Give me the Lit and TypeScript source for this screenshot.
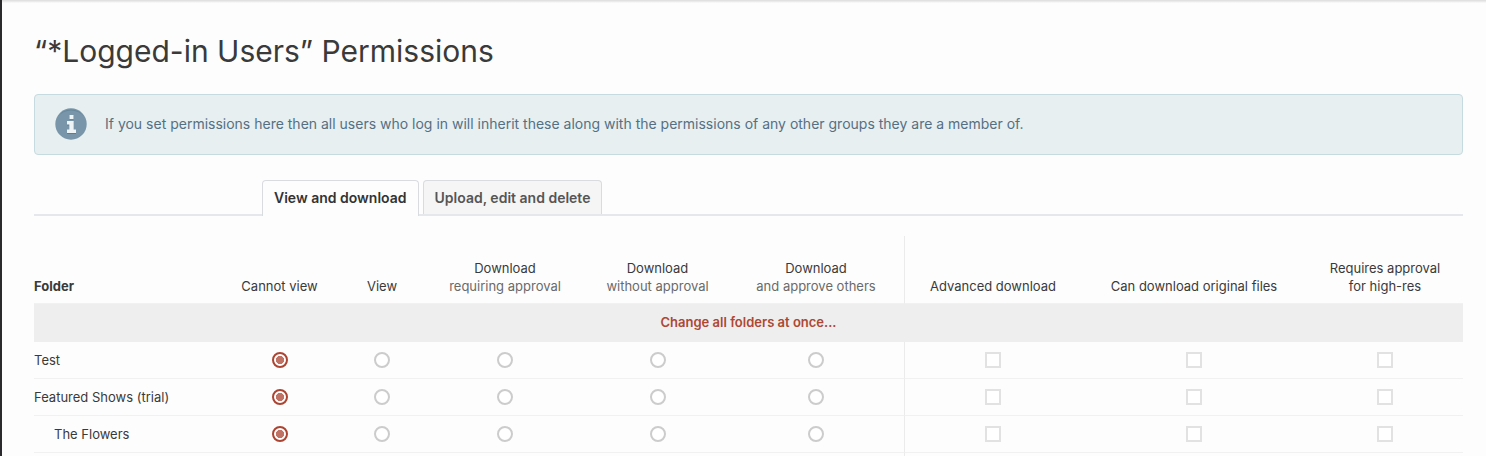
import { LitElement, html, css, nothing } from "lit";
import { customElement, state } from "lit/decorators.js";

interface Column {
  label: string;
  detail?: string;
  kind: "radio" | "checkbox";
  muted?: boolean;
}

interface Folder {
  name: string;
  depth: number;
  level: number;
}

const COLUMNS: Column[] = [
  { label: "Cannot view", kind: "radio" },
  { label: "View", kind: "radio" },
  { label: "Download", detail: "requiring approval", kind: "radio", muted: true },
  { label: "Download", detail: "without approval", kind: "radio", muted: true },
  { label: "Download", detail: "and approve others", kind: "radio", muted: true },
  { label: "Advanced download", kind: "checkbox" },
  { label: "Can download original files", kind: "checkbox" },
  { label: "Requires approval", detail: "for high-res", kind: "checkbox" },
];

const DIVIDER_AFTER = 4;

@customElement("app-root")
export class AppRoot extends LitElement {
  @state() private folders: Folder[] = [
    { name: "Test", depth: 0, level: 0 },
    { name: "Featured Shows (trial)", depth: 0, level: 0 },
    { name: "The Flowers", depth: 1, level: 0 },
  ];

  @state() private tab = 0;

  static styles = css`
    :host {
      display: block;
      box-sizing: border-box;
      min-height: 100vh;
      padding: 32px 23px 0 32px;
      border-left: 2px solid #2a2a2c;
      background: linear-gradient(#dcdcdc, #f0f0f0 2px, #fdfdfd 3px) 0 0 / 100% 3px no-repeat #fdfdfd;
      color: #3a3a3a;
      font: 13px/18px Inter, "Liberation Sans", sans-serif;
    }
    .title {
      margin: 0 0 24px;
      font-size: 30px;
      line-height: 38px;
      font-weight: 400;
    }
    .notice {
      display: flex;
      align-items: center;
      gap: 18px;
      box-sizing: border-box;
      min-height: 61px;
      padding: 0 20px 2px;
      border: 1px solid #c6dbe0;
      border-radius: 4px;
      background: #e7eff1;
      color: #557083;
      font-size: 14px;
    }
    .notice p {
      margin: 0;
    }
    .notice svg {
      flex: none;
      width: 32px;
      height: 32px;
    }
    .tabs {
      display: flex;
      gap: 4px;
      margin-top: 25px;
      padding-left: 228px;
      border-bottom: 2px solid #e4e8ec;
    }
    .tab {
      height: 34px;
      padding: 0 11px;
      border: 1px solid #d9dcdf;
      border-bottom: 0;
      border-radius: 4px 4px 0 0;
      background: #f5f5f5;
      color: #555;
      font: 600 14px/18px Inter, "Liberation Sans", sans-serif;
    }
    .tab.active {
      height: 36px;
      margin-bottom: -2px;
      padding-bottom: 2px;
      background: #fdfdfd;
      color: #333;
    }
    .matrix {
      width: 100%;
      margin-top: 20px;
      border-spacing: 0;
      table-layout: fixed;
    }
    .c0 { width: 184px; }
    .c1 { width: 123px; }
    .c2 { width: 82px; }
    .c3 { width: 164px; }
    .c4 { width: 141px; }
    .c5 { width: 177px; }
    .c6 { width: 176px; }
    .c7 { width: 226px; }
    .c8 { width: 156px; }
    th,
    td {
      padding: 0;
      text-align: center;
      font-weight: 400;
      border-bottom: 1px solid #f1f1f1;
    }
    .head th {
      height: 59px;
      padding-bottom: 8px;
      vertical-align: bottom;
      white-space: nowrap;
    }
    .head .name {
      font-weight: 700;
    }
    .name {
      text-align: left;
      white-space: nowrap;
    }
    .detail {
      display: block;
    }
    .muted {
      color: #6a6a6a;
    }
    .edge {
      border-right: 1px solid #ebebeb;
    }
    .bulk td {
      height: 36px;
      padding-bottom: 2px;
      border: 0;
      background: #eee;
    }
    .bulk a {
      color: #ad4734;
      font-weight: 600;
      text-decoration: none;
    }
    .row th,
    .row td {
      height: 36px;
    }
    .tail td {
      height: 3px;
      border-bottom: 0;
    }
    .row .nested {
      padding-left: 20px;
    }
    input {
      appearance: none;
      display: block;
      box-sizing: border-box;
      width: 16px;
      height: 16px;
      margin: 0 auto;
      border: 2px solid #ccc;
      background: #fff;
    }
    input[type="radio"] {
      border-radius: 50%;
    }
    input[type="radio"]:checked {
      border-color: #ac4431;
      background: radial-gradient(circle, #c07265 3.8px, #fff 4.4px);
    }
    input[type="checkbox"] {
      border-color: #e2e2e2;
    }
    input[type="checkbox"]:checked {
      background: #ac4431 content-box;
      padding: 2px;
    }
  `;

  private setLevel(index: number, level: number) {
    this.folders = this.folders.map((f, i) => (i === index ? { ...f, level } : f));
  }

  private renderCell(folder: Folder, row: number, column: Column, i: number) {
    const label = `${folder.name}: ${column.label} ${column.detail ?? ""}`.trim();
    return html`<td class=${i === DIVIDER_AFTER ? "edge" : ""}>
      ${column.kind === "radio"
        ? html`<input
            type="radio"
            name="level-${row}"
            aria-label=${label}
            .checked=${folder.level === i}
            @change=${() => this.setLevel(row, i)}
          />`
        : html`<input type="checkbox" aria-label=${label} ?disabled=${folder.level === 0} />`}
    </td>`;
  }

  render() {
    const tabs = ["View and download", "Upload, edit and delete"];
    return html`
      <h1 class="title">“*Logged-in Users” Permissions</h1>
      <div class="notice">
        <svg viewBox="0 0 32 32" aria-hidden="true">
          <circle cx="16" cy="16" r="15.7" fill="#7895a9" />
          <path d="M3 8.500A15.500 15.500 0 0 1 29 8.500A17 17 0 0 0 3 8.500Z" fill="#68869a" />
          <path d="M14.500 7.800H18.500V11.500H14.500ZM12 13.800H18.700V22H21V26H12V22H14.300V17.500H12Z" fill="#5c7b90" />
          <path d="M14.500 7H18.500V11H14.500ZM12 13H18.700V21.500H21V25H12V21.500H14.300V16.500H12Z" fill="#eef3f5" />
        </svg>
        <p>
          If you set permissions here then all users who log in will inherit these along with the
          permissions of any other groups they are a member of.
        </p>
      </div>
      <div class="tabs" role="tablist">
        ${tabs.map(
          (t, i) => html`<button
            class="tab ${i === this.tab ? "active" : ""}"
            role="tab"
            aria-selected=${i === this.tab}
            @click=${() => (this.tab = i)}
          >${t}</button>`
        )}
      </div>
      <table class="matrix">
        <colgroup>
          ${[0, 1, 2, 3, 4, 5, 6, 7, 8].map((n) => html`<col class="c${n}" />`)}
        </colgroup>
        <thead>
          <tr class="head">
            <th class="name" scope="col">Folder</th>
            ${COLUMNS.map(
              (c, i) => html`<th scope="col" class=${i === DIVIDER_AFTER ? "edge" : ""}>
                ${c.label}${c.detail
                  ? html`<span class="detail ${c.muted ? "muted" : ""}">${c.detail}</span>`
                  : nothing}
              </th>`
            )}
          </tr>
        </thead>
        <tbody>
          <tr class="bulk">
            <td colspan="9"><a href="#all">Change all folders at once...</a></td>
          </tr>
          ${this.folders.map(
            (f, row) => html`<tr class="row">
              <th class="name ${f.depth ? "nested" : ""}" scope="row">${f.name}</th>
              ${COLUMNS.map((c, i) => this.renderCell(f, row, c, i))}
            </tr>`
          )}
          <tr class="tail">
            <td colspan="6" class="edge"></td>
            <td colspan="3"></td>
          </tr>
        </tbody>
      </table>
    `;
  }
}
